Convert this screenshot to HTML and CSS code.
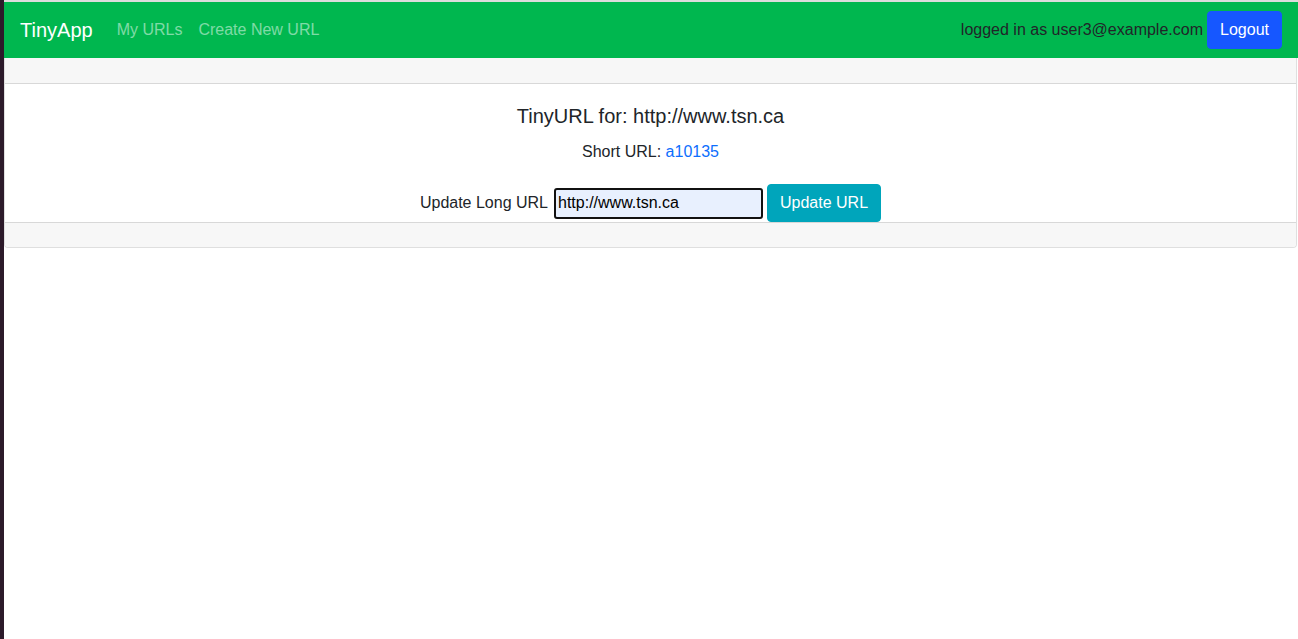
FILE: index.html
```html
<!DOCTYPE html>
<html lang="en">
<head>
<meta charset="utf-8">
<title>TinyApp</title>
<link rel="stylesheet" href="styles.css">
</head>
<body>
<div class="frame">
  <div class="edge"></div>
  <div class="page">
    <nav class="navbar">
      <div class="nav-left">
        <a class="brand" href="#">TinyApp</a>
        <a class="nav-link" href="#">My URLs</a>
        <a class="nav-link" href="#">Create New URL</a>
      </div>
      <div class="nav-right">
        <span class="user">logged in as user3@example.com</span>
        <button class="btn btn-primary">Logout</button>
      </div>
    </nav>
    <div class="card">
      <div class="card-header"></div>
      <div class="card-body">
        <h5 class="card-title">TinyURL for: http://www.tsn.ca</h5>
        <p class="card-text">Short URL: <a class="short" href="#">a10135</a></p>
        <form class="update-form">
          <label class="label" for="longURL">Update Long URL</label>
          <input id="longURL" class="url-input" type="text" value="http://www.tsn.ca">
          <button type="button" class="btn btn-info">Update URL</button>
        </form>
      </div>
      <div class="card-footer"></div>
    </div>
  </div>
</div>
</body>
</html>
```
FILE: styles.css
```css
* { box-sizing: border-box; }
html, body { margin: 0; padding: 0; height: 100%; }
body {
  font-family: "Liberation Sans", Arial, sans-serif;
  font-size: 16px;
  color: #212529;
  background: #fff;
}
.frame { display: flex; min-height: 100%; }
.edge { width: 4px; flex: none; background: #2c1a2a; }
.page { flex: 1; border-top: 2px solid #dcdcdc; }
.navbar {
  height: 56px;
  background: #00b74f;
  display: flex;
  align-items: center;
  justify-content: space-between;
  padding: 0 16px;
}
.nav-left { display: flex; align-items: center; }
.brand {
  color: #fff;
  font-size: 20px;
  text-decoration: none;
  margin-right: 16px;
  line-height: 30px;
}
.nav-link {
  color: rgba(255,255,255,0.5);
  text-decoration: none;
  padding: 8px 8px;
}
.nav-right { display: flex; align-items: center; gap: 4px; }
.user { color: #212529; }
.btn {
  font-family: inherit;
  font-size: 16px;
  border: 1px solid transparent;
  border-radius: 4px;
  padding: 0 12px;
  height: 38px;
  line-height: 36px;
  color: #fff;
  cursor: pointer;
}
.btn-primary { background: #1657ff; border-color: #1657ff; width: 75px; padding: 0; }
.btn-info { background: #00a5bb; border-color: #00a5bb; }
.card {
  border: 1px solid rgba(0,0,0,0.125);
  border-top: none;
  border-radius: 0 0 4px 4px;
  margin-right: 1px;
}
.card-header {
  height: 26px;
  background: #f7f7f7;
  border-bottom: 1px solid rgba(0,0,0,0.125);
}
.card-footer {
  height: 25px;
  background: #f7f7f7;
  border-top: 1px solid rgba(0,0,0,0.125);
  border-radius: 0 0 4px 4px;
}
.card-body {
  padding: 20px 20px 0;
  text-align: center;
}
.card-title {
  margin: 0 0 12px;
  font-size: 20px;
  font-weight: 400;
  line-height: 24px;
}
.card-text { margin: 0 0 20px; line-height: 24px; }
.short { color: #0d6efd; text-decoration: none; }
.update-form {
  display: flex;
  justify-content: center;
  align-items: center;
}
.label { margin-right: 6px; }
.url-input {
  width: 209px;
  height: 31px;
  font-family: inherit;
  font-size: 16px;
  color: #000;
  background: #e8f0fe;
  border: 2px solid #111;
  border-radius: 3px;
  padding: 0 2px;
  margin-right: 4px;
  outline: none;
}
```
